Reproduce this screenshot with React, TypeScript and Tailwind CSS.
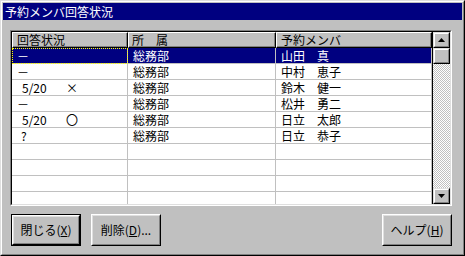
type Row = {
  mark: string;
  date?: string;
  dept: string;
  name: string;
};

const rows: Row[] = [
  { mark: "－", dept: "総務部", name: "山田　真" },
  { mark: "－", dept: "総務部", name: "中村　恵子" },
  { mark: "×", date: "5/20", dept: "総務部", name: "鈴木　健一" },
  { mark: "－", dept: "総務部", name: "松井　勇二" },
  { mark: "〇", date: "5/20", dept: "総務部", name: "日立　太郎" },
  { mark: "?", dept: "総務部", name: "日立　恭子" },
  { mark: "", dept: "", name: "" },
  { mark: "", dept: "", name: "" },
  { mark: "", dept: "", name: "" },
  { mark: "", dept: "", name: "" },
];

function Raised({ children, className = "" }: { children?: React.ReactNode; className?: string }) {
  return (
    <div className={`border border-t-[#dfdfdf] border-l-[#dfdfdf] border-b-black border-r-black bg-[#c0c0c0] ${className}`}>
      <div className="w-full h-full border border-t-white border-l-white border-b-[#808080] border-r-[#808080] flex items-center justify-center">
        {children}
      </div>
    </div>
  );
}

function PushButton({ children, isDefault = false }: { children: React.ReactNode; isDefault?: boolean }) {
  const inner = (
    <div className="w-full h-full border border-t-white border-l-white border-b-black border-r-black">
      <div className="w-full h-full border border-t-[#dfdfdf] border-l-[#dfdfdf] border-b-[#808080] border-r-[#808080] flex items-center justify-center text-black text-[12px] leading-[14px]">
        {children}
      </div>
    </div>
  );
  if (isDefault) {
    return <div className="w-[70px] h-[32px] border border-black bg-[#c0c0c0]">{inner}</div>;
  }
  return <div className="w-[70px] h-[32px] bg-[#c0c0c0]">{inner}</div>;
}

function App() {
  return (
    <div className="w-[465px] h-[256px] border border-t-[#dfdfdf] border-l-[#dfdfdf] border-b-black border-r-black font-['MS_UI_Gothic','Noto_Sans_CJK_JP',sans-serif] text-[12px]">
      <div className="w-full h-full border border-t-white border-l-white border-b-[#808080] border-r-[#808080] bg-[#c0c0c0] p-[1px] flex flex-col">
        {/* title bar */}
        <div className="h-[17px] bg-[#000080] text-white pl-[2px] flex items-center leading-[14px]">
          予約メンバ回答状況
        </div>

        <div className="pl-[7px] pt-[10px]">
          {/* list box */}
          <div className="w-[442px] h-[176px] border border-t-[#808080] border-l-[#808080] border-b-white border-r-white">
            <div className="w-full h-full border border-t-black border-l-black border-b-[#dfdfdf] border-r-[#dfdfdf] flex bg-white">
              <div className="w-[420px] flex flex-col overflow-hidden">
                <div className="h-[16px] flex shrink-0 text-black leading-[14px]">
                  <div className="w-[116px] border border-t-white border-l-white border-b-black border-r-black bg-[#c0c0c0] pl-[4px] shadow-[inset_-1px_-1px_0_#808080]">回答状況</div>
                  <div className="w-[148px] border border-t-white border-l-white border-b-black border-r-black bg-[#c0c0c0] pl-[3px] shadow-[inset_-1px_-1px_0_#808080]">所　属</div>
                  <div className="w-[156px] border border-t-white border-l-white border-b-black border-r-black bg-[#c0c0c0] pl-[4px] shadow-[inset_-1px_-1px_0_#808080]">予約メンバ</div>
                </div>
                {rows.map((row, i) => (
                  <div key={i} className={`h-[16px] flex shrink-0 leading-[15px] ${i === 0 ? "bg-[#000080] text-white" : "text-black"}`}>
                    <div className={`w-[116px] border-r border-b border-[#c0c0c0] flex ${i === 0 ? "outline outline-1 outline-dotted outline-[#ffff00] -outline-offset-1" : ""}`}>
                      {row.date ? (
                        <>
                          <span className="w-[54px] pl-[10px]">{row.date}</span>
                          <span>{row.mark}</span>
                        </>
                      ) : (
                        <span className={row.mark === "?" ? "pl-[9px]" : "pl-[5px]"}>{row.mark}</span>
                      )}
                    </div>
                    <div className="w-[148px] border-r border-b border-[#c0c0c0] pl-[5px]">{row.dept}</div>
                    <div className="w-[156px] border-r border-b border-[#c0c0c0] pl-[5px]">{row.name}</div>
                  </div>
                ))}
              </div>
              {/* scrollbar */}
              <div className="w-[18px] border-l border-black flex flex-col">
                <Raised className="h-[16px] shrink-0">
                  <svg width="7" height="4" viewBox="0 0 7 4">
                    <path d="M3.5 0 L7 4 L0 4 Z" fill="black" />
                  </svg>
                </Raised>
                <Raised className="h-[16px] shrink-0" />
                <div className="flex-1 bg-[repeating-conic-gradient(#c0c0c0_0_25%,#ffffff_0_50%)] bg-[length:2px_2px]" />
                <Raised className="h-[16px] shrink-0">
                  <svg width="7" height="4" viewBox="0 0 7 4">
                    <path d="M0 0 L7 0 L3.5 4 Z" fill="black" />
                  </svg>
                </Raised>
              </div>
            </div>
          </div>

          {/* buttons */}
          <div className="mt-[8px] ml-[1px] w-[441px] flex">
            <PushButton isDefault>
              閉じる(<span className="underline underline-offset-1">X</span>)
            </PushButton>
            <div className="ml-[10px]">
              <PushButton>
                削除(<span className="underline underline-offset-1">D</span>)...
              </PushButton>
            </div>
            <div className="ml-auto">
              <PushButton>
                ヘルプ(<span className="underline underline-offset-1">H</span>)
              </PushButton>
            </div>
          </div>
        </div>
      </div>
    </div>
  );
}

export default App;
